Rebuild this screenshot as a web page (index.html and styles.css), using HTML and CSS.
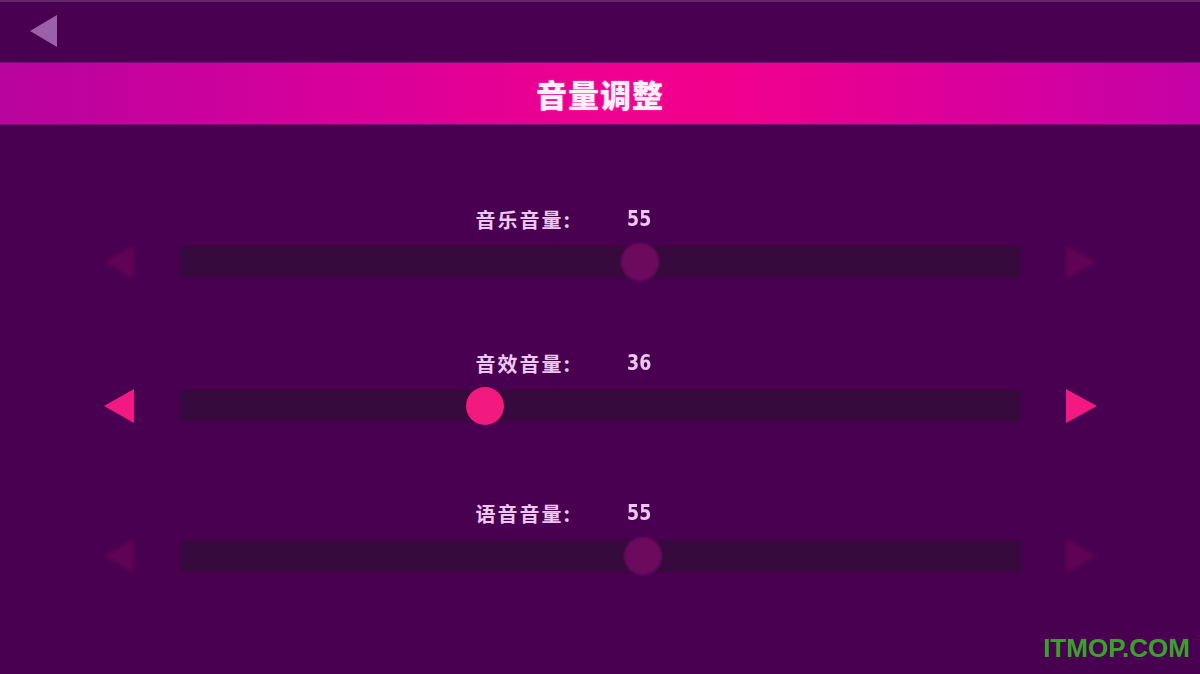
FILE: index.html
```html
<!DOCTYPE html>
<html>
<head>
    <title>音量调整</title>
    <link rel="stylesheet" href="styles.css">
</head>
<body>
    <div class="screen">
        <div class="topbar">
            <button class="back-btn" type="button">
                <svg width="28" height="32" viewBox="0 0 28 32"><polygon points="0,16 27,0 27,32" /></svg>
            </button>
        </div>

        <div class="title-band">
            <h1>音量调整</h1>
        </div>

        <div class="settings">
            <div class="row">
                <div class="row-head">
                    <span class="label">音乐音量:</span>
                    <span class="value">55</span>
                </div>
                <div class="slider-line inactive">
                    <svg class="arrow" width="30" height="34" viewBox="0 0 30 34"><polygon points="0,17 30,0 30,34" /></svg>
                    <div class="track">
                        <div class="thumb" style="left: 54.6%"></div>
                    </div>
                    <svg class="arrow" width="31" height="34" viewBox="0 0 31 34"><polygon points="0,0 31,17 0,34" /></svg>
                </div>
            </div>

            <div class="row">
                <div class="row-head">
                    <span class="label">音效音量:</span>
                    <span class="value">36</span>
                </div>
                <div class="slider-line">
                    <svg class="arrow" width="30" height="34" viewBox="0 0 30 34"><polygon points="0,17 30,0 30,34" /></svg>
                    <div class="track">
                        <div class="thumb" style="left: 36.2%"></div>
                    </div>
                    <svg class="arrow" width="31" height="34" viewBox="0 0 31 34"><polygon points="0,0 31,17 0,34" /></svg>
                </div>
            </div>

            <div class="row row-last">
                <div class="row-head">
                    <span class="label">语音音量:</span>
                    <span class="value">55</span>
                </div>
                <div class="slider-line inactive">
                    <svg class="arrow" width="30" height="34" viewBox="0 0 30 34"><polygon points="0,17 30,0 30,34" /></svg>
                    <div class="track">
                        <div class="thumb" style="left: 55%"></div>
                    </div>
                    <svg class="arrow" width="31" height="34" viewBox="0 0 31 34"><polygon points="0,0 31,17 0,34" /></svg>
                </div>
            </div>
        </div>

        <div class="watermark">ITMOP.COM</div>
    </div>
</body>
</html>
```

FILE: styles.css
```css
body {
    margin: 0;
    background-color: #4a0050;
    font-family: "Noto Sans CJK SC", "Noto Sans", sans-serif;
}

.screen {
    position: relative;
    width: 1200px;
    height: 674px;
    overflow: hidden;
    background-color: #4a0050;
}

.topbar {
    height: 60px;
    border-top: 2px solid #67256d;
    padding-left: 30px;
    display: flex;
    align-items: center;
}

.back-btn {
    background: none;
    border: none;
    padding: 0;
    cursor: pointer;
}

.back-btn svg {
    display: block;
    fill: #9c60ab;
    margin-top: -3px;
}

.title-band {
    height: 61px;
    border-top: 1px solid #7a0e78;
    border-bottom: 1px solid #7e0a78;
    background: linear-gradient(90deg, #b8049e 0%, #d4009c 25%, #ee0090 50%, #f2008c 60%, #d6009e 85%, #c402a6 100%);
    display: flex;
    align-items: center;
    justify-content: center;
}

.title-band h1 {
    margin: 0;
    color: #fdeef8;
    font-size: 31px;
    font-weight: 900;
    letter-spacing: 1px;
    text-shadow: 0 0 2px rgba(255, 160, 220, 0.6);
}

.settings {
    padding-top: 82px;
    display: flex;
    flex-direction: column;
    gap: 74px;
}

.row {
    display: flex;
    flex-direction: column;
    gap: 16px;
}

.row-last {
    margin-top: 6px;
}

.row-head {
    display: flex;
    justify-content: center;
    align-items: center;
    gap: 54px;
    padding-right: 72px;
    height: 24px;
    color: #ecc8f0;
}

.label {
    font-size: 20px;
    font-weight: 700;
    letter-spacing: 2px;
}

.value {
    font-family: "DejaVu Sans Condensed", "DejaVu Sans", sans-serif;
    font-size: 21px;
    font-weight: 700;
    transform: scaleX(0.92);
}

.slider-line {
    display: flex;
    align-items: center;
    height: 30px;
    padding: 0 103px 0 104px;
}

.arrow {
    display: block;
    fill: #f21a82;
    flex-shrink: 0;
}

.track {
    position: relative;
    width: 840px;
    height: 30px;
    margin: 0 45px 0 47px;
    background-color: #360a3c;
    box-shadow: 0 0 3px #360a3c;
}

.thumb {
    position: absolute;
    top: -4px;
    width: 38px;
    height: 38px;
    margin-left: -19px;
    border-radius: 50%;
    background-color: #f2197f;
}

.inactive .arrow {
    opacity: 0.13;
    filter: blur(2px);
}

.inactive .thumb {
    background-color: #6c0a5e;
    filter: blur(1px);
}

.watermark {
    position: absolute;
    right: 10px;
    bottom: 10px;
    color: #3aa02c;
    font-family: "Liberation Sans", Arial, sans-serif;
    font-size: 26px;
    font-weight: 700;
}
```
